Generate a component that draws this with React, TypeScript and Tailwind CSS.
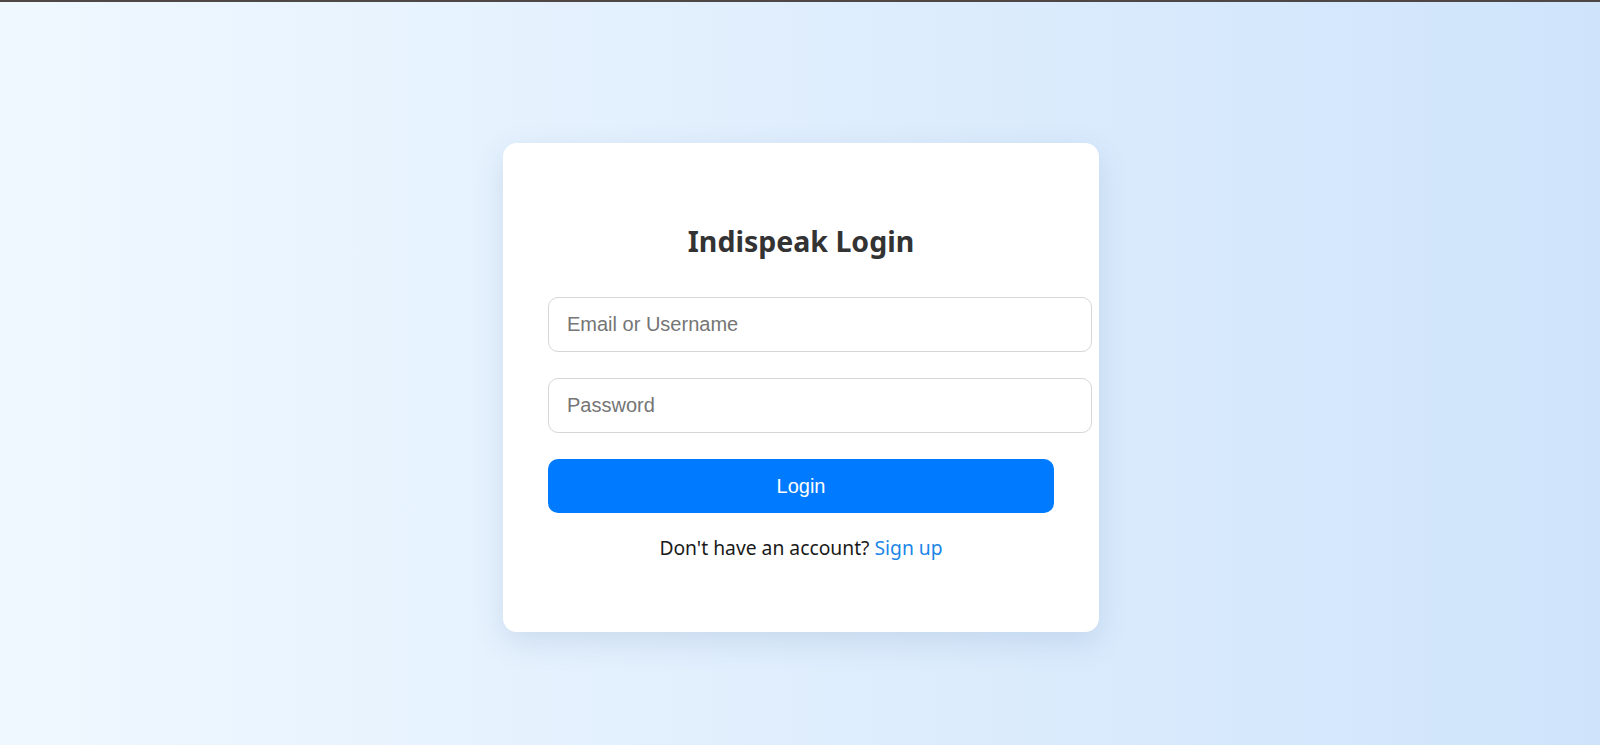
import React from 'react';

const App: React.FC = () => {
  return (
    <div className="min-h-[745px] w-full bg-gradient-to-r from-[#f0f8ff] to-[#cfe4fb] font-['Noto_Sans',sans-serif]">
      <div className="h-[2px] w-full bg-[#4f4646]" />
      <div className="flex justify-center pt-[141px]">
        {/* login card */}
        <div className="ml-[2px] w-[596px] rounded-[14px] bg-white px-[45px] pt-[78px] pb-[69px] shadow-[0_10px_30px_rgba(60,100,150,0.15)]">
          <h2 className="text-center text-[28.5px] font-bold leading-[40px] text-[#333]">Indispeak Login</h2>
          <form className="mt-[36px] flex flex-col" onSubmit={(e) => e.preventDefault()}>
            <input
              type="text"
              placeholder="Email or Username"
              className="box-content w-full rounded-[10px] border border-[#d6d6d6] bg-white px-[18px] py-[16px] font-['Liberation_Sans',Arial,sans-serif] text-[20px] leading-[21px] text-[#333] outline-none placeholder:text-[#757575]"
            />
            <input
              type="password"
              placeholder="Password"
              className="mt-[26px] box-content w-full rounded-[10px] border border-[#d6d6d6] bg-white px-[18px] py-[16px] font-['Liberation_Sans',Arial,sans-serif] text-[20px] leading-[21px] text-[#333] outline-none placeholder:text-[#757575]"
            />
            <button
              type="submit"
              className="mt-[26px] h-[54px] w-full rounded-[10px] bg-[#007bff] font-['Liberation_Sans',Arial,sans-serif] text-[20px] text-white"
            >
              Login
            </button>
          </form>
          <p className="mt-[20px] text-center text-[19.3px] leading-[30px] text-[#1a1a1a]">
            Don't have an account? <a href="#" className="text-[#1a86e8]">Sign up</a>
          </p>
        </div>
      </div>
    </div>
  );
};

export default App;
